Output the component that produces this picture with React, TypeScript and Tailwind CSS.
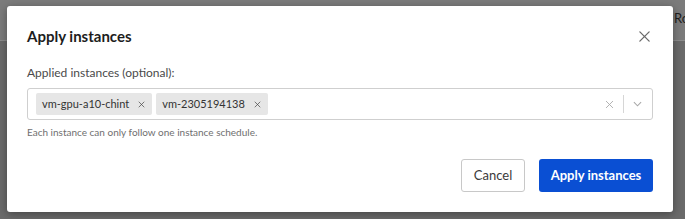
import React from "react";

function XIcon({ className }: { className?: string }) {
  return (
    <svg viewBox="0 0 14 14" className={className} fill="none" stroke="currentColor" strokeWidth="1.4" strokeLinecap="round">
      <path d="M2 2 L12 12 M12 2 L2 12" />
    </svg>
  );
}

export default function App() {
  return (
    <div className="relative w-[685px] h-[219px] overflow-hidden bg-[#6a6a6a]" style={{ fontFamily: 'Lato, "Noto Sans", sans-serif' }}>
      <div className="h-[41px] bg-[#7b7b7b] border-b border-[#8c8c8c] flex justify-end items-center">
        <span className="text-[13px] text-[#1e1e1e] mr-[-4px] mb-[2px]">Ro</span>
      </div>
      <div className="absolute left-[7px] top-[6px] w-[666px] h-[206px] bg-white rounded-[3px] shadow-[0_2px_8px_rgba(0,0,0,0.35)] flex flex-col">
        <div className="flex items-center justify-between pl-[20px] pr-[22px] pt-[19px]">
          <h2 className="text-[15px] font-bold text-[#1d1d1d] leading-[22px]">Apply instances</h2>
          <XIcon className="w-[13px] h-[13px] text-[#6a6a6a]" />
        </div>
        <div className="px-[20px] pt-[18px]">
          <div className="text-[12px] text-[#4a4a4a] leading-[16px]">Applied instances (optional):</div>
          <div className="mt-[7px] h-[32px] border border-[#cfcfcf] rounded-[3px] flex items-center pl-[8px] pr-[10px]">
            <div className="flex-1 flex gap-[4px]">
              <span className="h-[22px] bg-[#e6e6e6] rounded-[2px] pl-[6px] pr-[7px] flex items-center gap-[9px] text-[11px] text-[#333]">
                vm-gpu-a10-chint
                <XIcon className="w-[7px] h-[7px] text-[#444]" />
              </span>
              <span className="h-[22px] bg-[#e6e6e6] rounded-[2px] pl-[6px] pr-[7px] flex items-center gap-[9px] text-[11px] text-[#333]">
                vm-2305194138
                <XIcon className="w-[7px] h-[7px] text-[#444]" />
              </span>
            </div>
            <XIcon className="w-[9px] h-[9px] text-[#aaaaaa]" />
            <div className="w-px h-[18px] bg-[#d6d6d6] mx-[9px]" />
            <svg viewBox="0 0 10 6" className="w-[9px] h-[6px] text-[#a8a8a8]" fill="none" stroke="currentColor" strokeWidth="1.2">
              <path d="M1 1 L5 5 L9 1" />
            </svg>
          </div>
          <div className="mt-[5px] text-[10px] text-[#6f6f6f]">Each instance can only follow one instance schedule.</div>
        </div>
        <div className="mt-auto mb-[20px] flex justify-end gap-[14px] pr-[20px]">
          <button className="h-[33px] w-[64px] border border-[#c8c8c8] rounded-[3px] text-[13px] text-[#3a3a3a] bg-white">Cancel</button>
          <button className="h-[33px] w-[114px] rounded-[3px] text-[13px] font-bold text-white bg-[#0a4fd3]">Apply instances</button>
        </div>
      </div>
    </div>
  );
}
